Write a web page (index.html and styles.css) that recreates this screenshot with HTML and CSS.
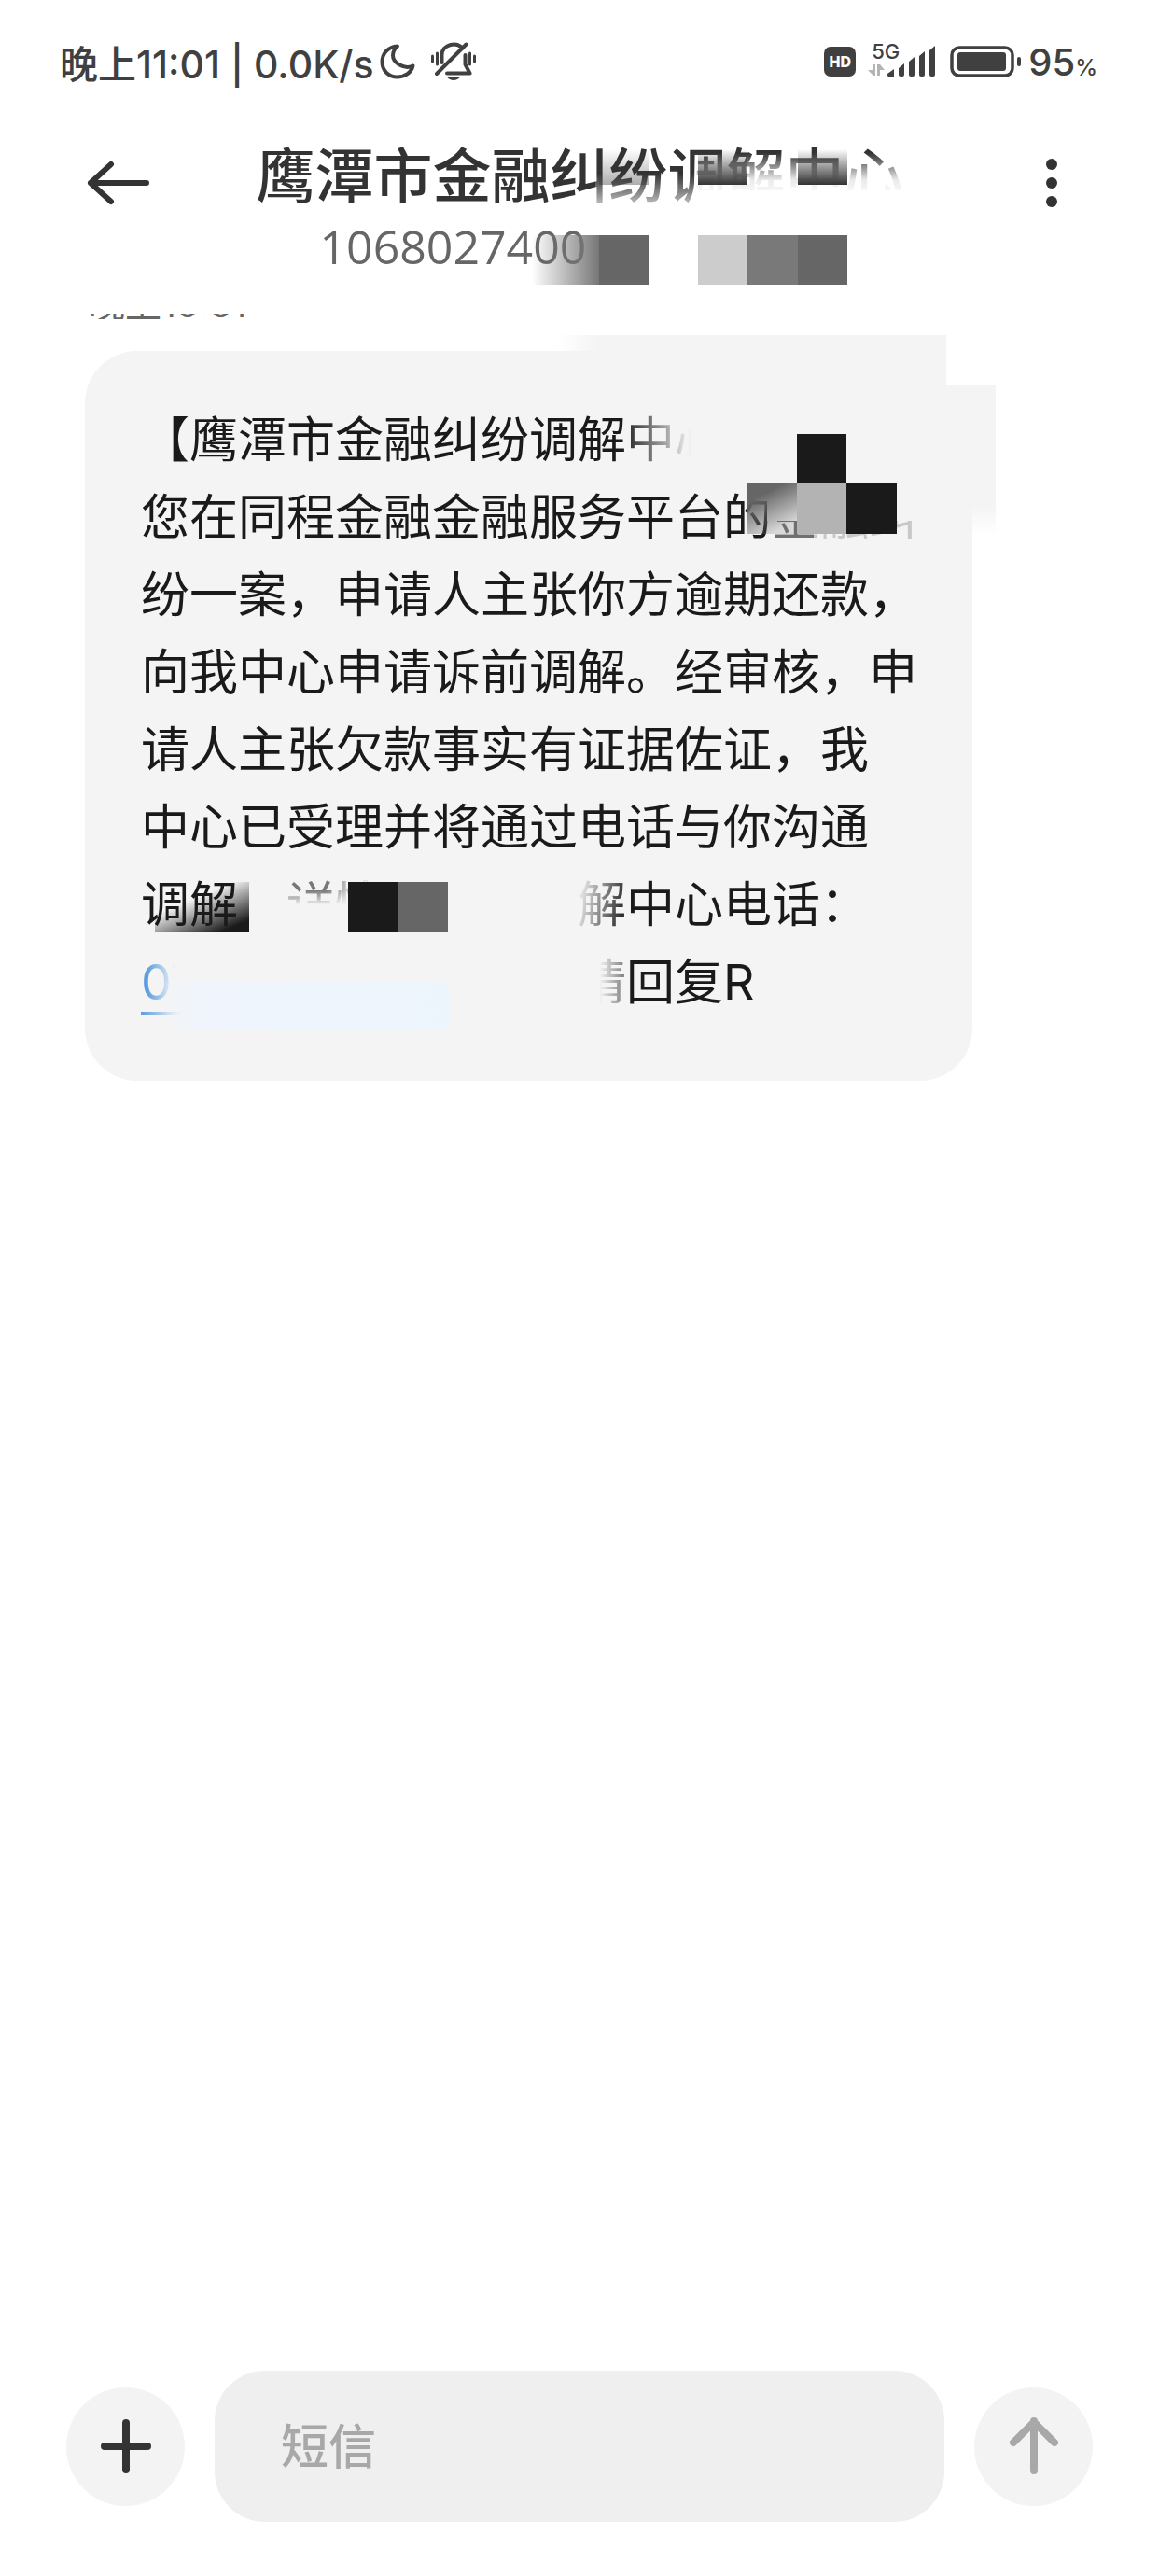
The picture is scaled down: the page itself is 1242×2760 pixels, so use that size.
FILE: index.html
```html
<!DOCTYPE html>
<html lang="zh-CN">
<head>
    <meta charset="UTF-8">
    <meta name="viewport" content="width=device-width, initial-scale=1.0">
    <title>短信</title>
    <link rel="stylesheet" href="styles.css">
</head>
<body>
    <!-- 状态栏 -->
    <div class="status-bar">
        <div class="status-left">
            <span>晚上11:01 | 0.0K/s</span>
            <svg class="icon-moon" width="38" height="38" viewBox="0 0 38 38">
                <path d="M19 2.500C9 3 2.500 10 2.500 19.500C2.500 28.500 9.500 35.500 18.500 35.500C27 35.500 34 30.500 35.500 23.500C26 28 14 20 14 12.500C14 8 16 5 19 2.500Z"/>
            </svg>
            <svg class="icon-bell" width="50" height="42" viewBox="0 0 50 42">
                <path d="M2.500 15V21M7.500 12V24M42.500 12V24M47.500 15V21" stroke-width="3"/>
                <path d="M12.500 22V14C12.500 2 30 -1 34.500 7M37.500 14V24L42.500 33.500H18M7 34L38.500 2.500"/>
                <path class="fill" d="M18 37.500H32C29 42 21 42 18 37.500Z"/>
            </svg>
        </div>
        <div class="status-right">
            <span class="hd">HD</span>
            <div class="signal">
                <span class="net">5G</span>
                <svg width="73" height="34" viewBox="0 0 73 34">
                    <g fill="#b4b4b4">
                        <path d="M5 20h3v12h-2L0 26h5zM10 20h3l5 6h-5v6h-3z"/>
                    </g>
                    <path d="M21 30L28 25V33H22Q21 33 21 31ZM33 24L39 19V31Q39 33 37 33H35Q33 33 33 31ZM44 17L50 12V31Q50 33 48 33H46Q44 33 44 31ZM55 11L61 6V31Q61 33 59 33H57Q55 33 55 31ZM66 5L72 0V31Q72 33 70 33H68Q66 33 66 31Z"/>
                </svg>
            </div>
            <svg class="battery" width="76" height="34" viewBox="0 0 76 34">
                <rect x="2" y="2" width="65" height="30" rx="8" fill="none" stroke="#404040" stroke-width="3.500"/>
                <rect x="8" y="7" width="52" height="20" rx="3"/>
                <rect x="72" y="12" width="4" height="10" rx="2"/>
            </svg>
            <span class="percent">95<small>%</small></span>
        </div>
    </div>

    <!-- 会话标题 -->
    <header class="chat-header">
        <button class="icon-btn" aria-label="返回">
            <svg width="68" height="48" viewBox="0 0 68 48">
                <path d="M27 4L5 24L27 44M5 24H65"/>
            </svg>
        </button>
        <div class="heading">
            <h1>鹰潭市金融纠纷调解中心</h1>
            <p class="number">1068027400</p>
            <svg class="smudge" width="704" height="168" viewBox="5 0 704 168">
                <defs>
                    <linearGradient id="whiteDown" x2="0" y2="1">
                        <stop offset="0" stop-color="#fff" stop-opacity="0"/>
                        <stop offset="0.600" stop-color="#fff" stop-opacity="0.900"/>
                        <stop offset="1" stop-color="#fff"/>
                    </linearGradient>
                    <linearGradient id="whiteSoft" x2="0" y2="1">
                        <stop offset="0" stop-color="#fff" stop-opacity="0"/>
                        <stop offset="1" stop-color="#fff" stop-opacity="0.950"/>
                    </linearGradient>
                    <linearGradient id="darkDown" x2="0" y2="1">
                        <stop offset="0" stop-color="#333" stop-opacity="0"/>
                        <stop offset="1" stop-color="#333"/>
                    </linearGradient>
                    <linearGradient id="greyRight">
                        <stop offset="0" stop-color="#777" stop-opacity="0"/>
                        <stop offset="1" stop-color="#777"/>
                    </linearGradient>
                </defs>
                <rect x="368" y="44" width="106" height="46" fill="url(#whiteSoft)"/>
                <rect x="474" y="22" width="230" height="48" fill="url(#whiteDown)"/>
                <rect x="474" y="62" width="230" height="30" fill="#fff"/>
                <rect x="372" y="18" width="53" height="38" fill="url(#darkDown)" opacity="0.400"/>
                <rect x="478" y="18" width="53" height="38" fill="url(#darkDown)"/>
                <rect x="585" y="18" width="53" height="38" fill="url(#darkDown)"/>
                <rect x="300" y="110" width="72" height="53" fill="url(#greyRight)"/>
                <rect x="372" y="110" width="53" height="53" fill="#666"/>
                <rect x="478" y="110" width="53" height="53" fill="#ccc"/>
                <rect x="531" y="110" width="54" height="53" fill="#797979"/>
                <rect x="585" y="110" width="53" height="53" fill="#666"/>
            </svg>
        </div>
        <button class="icon-btn more" aria-label="更多">
            <svg width="12" height="52" viewBox="0 0 12 52">
                <circle cx="6" cy="6" r="6"/>
                <circle cx="6" cy="26" r="6"/>
                <circle cx="6" cy="46" r="6"/>
            </svg>
        </button>
    </header>

    <!-- 消息列表 -->
    <main class="thread">
        <div class="time"><span>晚上10:51</span></div>
        <div class="bubble">
            <svg class="smudge back" width="976" height="200" viewBox="0 0 976 200">
                <defs>
                    <linearGradient id="edgeIn">
                        <stop offset="0" stop-color="#f4f4f4" stop-opacity="0"/>
                        <stop offset="1" stop-color="#f4f4f4"/>
                    </linearGradient>
                    <linearGradient id="edgeDown" x2="0" y2="1">
                        <stop offset="0" stop-color="#f4f4f4"/>
                        <stop offset="1" stop-color="#f4f4f4" stop-opacity="0"/>
                    </linearGradient>
                </defs>
                <rect x="923" y="-17" width="30" height="53" fill="#fff"/>
                <rect x="505" y="-17" width="45" height="40" fill="url(#edgeIn)"/>
                <rect x="550" y="-17" width="373" height="53" fill="#f4f4f4"/>
                <rect x="900" y="36" width="76" height="130" fill="#f4f4f4"/>
                <rect x="945" y="166" width="31" height="32" fill="url(#edgeDown)"/>
            </svg>
            <p>【鹰潭市金融纠纷调解中心<br>
            您在同程金融金融服务平台的金融纠<br>
            纷一案，申请人主张你方逾期还款，<br>
            向我中心申请诉前调解。经审核，申<br>
            请人主张欠款事实有证据佐证，我<br>
            中心已受理并将通过电话与你沟通<br>
            调解。<span class="fade-down">详情</span><span class="gap"></span><span class="fade-left">解</span>中心电话：<br>
            <a href="#" class="tel"><span>07</span></a><span class="fade-left half">请</span>回复R</p>
            <svg class="smudge" width="951" height="782" viewBox="0 0 951 782">
                <defs>
                    <linearGradient id="darkCorner" x1="0.200" y1="0" x2="1" y2="1">
                        <stop offset="0.300" stop-color="#1a1a1a" stop-opacity="0"/>
                        <stop offset="0.850" stop-color="#1a1a1a"/>
                    </linearGradient>
                    <linearGradient id="greyCorner" x2="0.500" y2="1">
                        <stop offset="0.300" stop-color="#666"/>
                        <stop offset="1" stop-color="#666" stop-opacity="0.200"/>
                    </linearGradient>
                    <linearGradient id="blueIn">
                        <stop offset="0" stop-color="#edf5fd" stop-opacity="0"/>
                        <stop offset="0.150" stop-color="#f0f5fd"/>
                        <stop offset="1" stop-color="#ecf4fc"/>
                    </linearGradient>
                </defs>
                <!-- 第一、二行 -->
                <rect x="575" y="60" width="75" height="72" fill="url(#edgeIn)"/>
                <rect x="650" y="60" width="70" height="72" fill="#f4f4f4"/>
                <rect x="731" y="134" width="164" height="48" fill="#f4f4f4"/>
                <rect x="731" y="182" width="50" height="30" fill="#f4f4f4" opacity="0.400"/>
                <rect x="781" y="182" width="114" height="30" fill="#f4f4f4" opacity="0.800"/>
                <rect x="763" y="89" width="53" height="53" fill="#1a1a1a"/>
                <rect x="709" y="142" width="54" height="54" fill="url(#greyCorner)"/>
                <rect x="763" y="142" width="53" height="54" fill="#b3b3b3"/>
                <rect x="816" y="142" width="54" height="54" fill="#1a1a1a"/>
                <!-- 第七行 -->
                <rect x="166" y="560" width="46" height="68" fill="#f4f4f4"/>
                <rect x="75" y="569" width="101" height="54" fill="url(#darkCorner)"/>
                <rect x="282" y="569" width="54" height="54" fill="#1a1a1a"/>
                <rect x="336" y="569" width="53" height="54" fill="#666"/>
                <!-- 第八行 -->
                <rect x="79" y="676" width="311" height="52" rx="8" fill="url(#blueIn)"/>
            </svg>
        </div>
    </main>

    <!-- 输入栏 -->
    <footer class="composer">
        <button class="round-btn" aria-label="添加">
            <svg width="56" height="60" viewBox="0 0 56 60">
                <path d="M28 5V55M5 30H51"/>
            </svg>
        </button>
        <input type="text" placeholder="短信" aria-label="短信">
        <button class="round-btn send" aria-label="发送">
            <svg width="52" height="62" viewBox="0 0 52 62">
                <path d="M26 4V57M4 27L26 5L48 27"/>
            </svg>
        </button>
    </footer>
</body>
</html>
```
FILE: styles.css
```css
* {
    box-sizing: border-box;
}
body {
    margin: 0;
    min-height: 100vh;
    display: flex;
    flex-direction: column;
    background: #fff;
    color: #1a1a1a;
    font-family: Inter, "Noto Sans CJK SC", sans-serif;
}
h1, p {
    margin: 0;
    font-weight: 400;
}
button {
    padding: 0;
    border: 0;
    background: none;
    cursor: pointer;
}
svg {
    display: block;
    flex: none;
}

/* 状态栏 */
.status-bar {
    display: flex;
    justify-content: space-between;
    align-items: center;
    height: 132px;
    padding: 0 66px 0 64px;
    color: #404040;
    fill: #404040;
    font-size: 41px;
    font-weight: 500;
    white-space: nowrap;
}
.status-left, .status-right {
    display: flex;
    align-items: center;
}
.icon-moon, .icon-bell {
    fill: none;
    stroke: #404040;
    stroke-width: 4;
    stroke-linecap: round;
    stroke-linejoin: round;
}
.icon-moon {
    margin-left: 6px;
}
.icon-bell {
    margin-left: 16px;
}
.icon-bell .fill {
    fill: #404040;
    stroke: none;
}
.hd {
    width: 34px;
    margin-right: 13px;
    border-radius: 7px;
    background: #404040;
    color: #fff;
    font-size: 16px;
    font-weight: 800;
    line-height: 32px;
    text-align: center;
}
.signal {
    position: relative;
    margin-right: 15px;
}
.net {
    position: absolute;
    left: 4px;
    top: -6px;
    font-size: 22px;
    line-height: 24px;
}
.battery {
    margin-right: 8px;
}
.percent {
    font-size: 40px;
}
.percent small {
    font-size: 24px;
}

/* 标题 */
.chat-header {
    display: flex;
    justify-content: space-between;
    align-items: flex-start;
    height: 204px;
    padding: 10px 92px 0;
}
.icon-btn {
    display: flex;
    align-items: center;
    height: 108px;
}
.icon-btn path {
    fill: none;
    stroke: #333;
    stroke-width: 6;
    stroke-linecap: round;
    stroke-linejoin: round;
}
.more {
    justify-content: flex-end;
    width: 68px;
    padding-right: 17px;
    fill: #333;
}
.heading {
    position: relative;
}
.heading h1 {
    color: #333;
    font-size: 63px;
    font-weight: 500;
    line-height: 92px;
}
.number {
    padding-left: 68px;
    color: #666;
    font-family: "Open Sans", sans-serif;
    font-size: 50px;
    font-weight: 500;
    line-height: 60px;
}
.smudge {
    position: absolute;
    left: 0;
    top: 0;
    overflow: visible;
    pointer-events: none;
}

/* 消息 */
.thread {
    flex: 1;
    padding: 0 200px 0 91px;
}
.time {
    display: flex;
    align-items: flex-end;
    height: 6px;
    margin-bottom: 34px;
    padding-left: 4px;
    overflow: hidden;
    color: #666;
    font-size: 39px;
    line-height: 32px;
}
.bubble {
    position: relative;
    padding: 54px 60px 64px;
    border-radius: 56px;
    background: #f4f4f4;
}
.bubble p {
    position: relative;
    font-size: 52px;
    line-height: 83px;
    white-space: nowrap;
}
.gap {
    display: inline-block;
    width: 4em;
}
.fade-down, .fade-left, .tel span {
    color: transparent;
    background-clip: text;
    -webkit-background-clip: text;
}
.fade-down {
    background-image: linear-gradient(100deg, transparent 0, transparent 40%, #f4f4f4 70%), linear-gradient(#777 25%, #f4f4f4 50%);
}
.fade-left {
    background-image: linear-gradient(100deg, #f4f4f4 5%, #1a1a1a 95%);
}
.fade-left.half {
    background-image: linear-gradient(90deg, #f4f4f4 45%, #777 100%);
}
.tel {
    display: inline-block;
    width: 9em;
    text-decoration: none;
}
.tel span {
    border-bottom: 3px solid;
    border-image: linear-gradient(90deg, #5c9be0, #f4f4f4 70%) 1;
    background-image: linear-gradient(90deg, #5c9be0 10%, #f4f4f4 60%);
}

/* 输入栏 */
.composer {
    display: flex;
    align-items: center;
    gap: 32px;
    padding: 0 71px 58px;
}
.composer input {
    flex: 1;
    min-width: 0;
    height: 162px;
    padding: 0 71px;
    border: 0;
    border-radius: 54px;
    background: #efefef;
    color: #1a1a1a;
    font-family: inherit;
    font-size: 51px;
    font-weight: 500;
}
.composer input::placeholder {
    color: #a8a8a8;
}
.round-btn {
    display: flex;
    justify-content: center;
    align-items: center;
    width: 127px;
    height: 127px;
    border-radius: 50%;
    background: #f3f3f3;
}
.round-btn path {
    fill: none;
    stroke: #333;
    stroke-width: 8;
    stroke-linecap: round;
    stroke-linejoin: round;
}
.send path {
    stroke: #a8a8a8;
}
```
